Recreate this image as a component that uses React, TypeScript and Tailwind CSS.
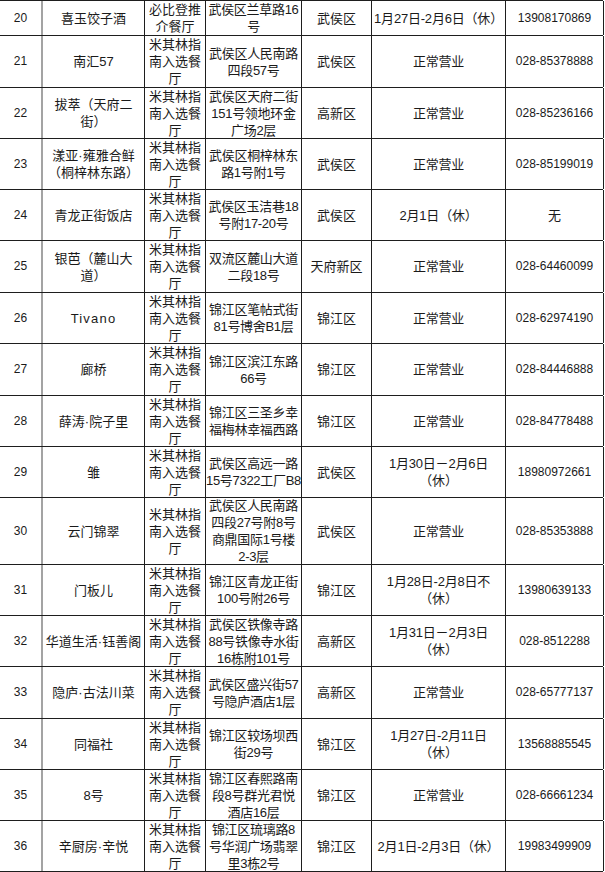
import React from "react";

type Row = {
  no: string;
  name: string[];
  kind: string[];
  addr: string[];
  area: string;
  hours: string[];
  phone: string;
};

const MICHELIN = ["米其林指", "南入选餐", "厅"];
const OPEN = ["正常营业"];

const rows: Row[] = [
  { no: "20", name: ["喜玉饺子酒"], kind: ["必比登推", "介餐厅"], addr: ["武侯区兰草路16", "号"], area: "武侯区", hours: ["1月27日-2月6日（休）"], phone: "13908170869" },
  { no: "21", name: ["南汇57"], kind: MICHELIN, addr: ["武侯区人民南路", "四段57号"], area: "武侯区", hours: OPEN, phone: "028-85378888" },
  { no: "22", name: ["拔萃（天府二", "街）"], kind: MICHELIN, addr: ["武侯区天府二街", "151号领地环金", "广场2层"], area: "高新区", hours: OPEN, phone: "028-85236166" },
  { no: "23", name: ["漾亚·雍雅合鲜", "（桐梓林东路）"], kind: MICHELIN, addr: ["武侯区桐梓林东", "路1号附1号"], area: "武侯区", hours: OPEN, phone: "028-85199019" },
  { no: "24", name: ["青龙正街饭店"], kind: MICHELIN, addr: ["武侯区玉洁巷18", "号附17-20号"], area: "武侯区", hours: ["2月1日（休）"], phone: "无" },
  { no: "25", name: ["银芭（麓山大", "道）"], kind: MICHELIN, addr: ["双流区麓山大道", "二段18号"], area: "天府新区", hours: OPEN, phone: "028-64460099" },
  { no: "26", name: ["Tivano"], kind: MICHELIN, addr: ["锦江区笔帖式街", "81号博舍B1层"], area: "锦江区", hours: OPEN, phone: "028-62974190" },
  { no: "27", name: ["廊桥"], kind: MICHELIN, addr: ["锦江区滨江东路", "66号"], area: "锦江区", hours: OPEN, phone: "028-84446888" },
  { no: "28", name: ["薛涛·院子里"], kind: MICHELIN, addr: ["锦江区三圣乡幸", "福梅林幸福西路"], area: "锦江区", hours: OPEN, phone: "028-84778488" },
  { no: "29", name: ["雏"], kind: MICHELIN, addr: ["武侯区高远一路", "15号7322工厂B8"], area: "武侯区", hours: ["1月30日－2月6日", "（休）"], phone: "18980972661" },
  { no: "30", name: ["云门锦翠"], kind: MICHELIN, addr: ["武侯区人民南路", "四段27号附8号", "商鼎国际1号楼", "2-3层"], area: "武侯区", hours: OPEN, phone: "028-85353888" },
  { no: "31", name: ["门板儿"], kind: MICHELIN, addr: ["锦江区青龙正街", "100号附26号"], area: "锦江区", hours: ["1月28日-2月8日不", "（休）"], phone: "13980639133" },
  { no: "32", name: ["华道生活·钰善阁"], kind: MICHELIN, addr: ["武侯区铁像寺路", "88号铁像寺水街", "16栋附101号"], area: "高新区", hours: ["1月31日－2月3日", "（休）"], phone: "028-8512288" },
  { no: "33", name: ["隐庐·古法川菜"], kind: MICHELIN, addr: ["武侯区盛兴街57", "号隐庐酒店1层"], area: "高新区", hours: OPEN, phone: "028-65777137" },
  { no: "34", name: ["同福社"], kind: MICHELIN, addr: ["锦江区较场坝西", "街29号"], area: "锦江区", hours: ["1月27日-2月11日", "（休）"], phone: "13568885545" },
  { no: "35", name: ["8号"], kind: MICHELIN, addr: ["锦江区春熙路南", "段8号群光君悦", "酒店16层"], area: "锦江区", hours: OPEN, phone: "028-66661234" },
  { no: "36", name: ["辛厨房·辛悦"], kind: MICHELIN, addr: ["锦江区琉璃路8", "号华润广场翡翠", "里3栋2号"], area: "锦江区", hours: ["2月1日-2月3日（休）"], phone: "19983499909" },
];

// row heights including the bottom rule, read off the screenshot
const heights = [
  "h-[35px]", "h-[52px]", "h-[51px]", "h-[51px]", "h-[51px]", "h-[52px]",
  "h-[51px]", "h-[52px]", "h-[51px]", "h-[51px]", "h-[67px]", "h-[51px]",
  "h-[51px]", "h-[52px]", "h-[51px]", "h-[51px]", "h-[51px]",
];

function Lines({ lines }: { lines: string[] }) {
  return (
    <span className="whitespace-nowrap">
      {lines.map((l, i) => (
        <React.Fragment key={i}>
          {i > 0 && <br />}
          {l}
        </React.Fragment>
      ))}
    </span>
  );
}

const cell = "flex items-center justify-center overflow-hidden text-center border-r border-[#1e1e1e]";
const digits = "text-[12px]";

export default function App() {
  return (
    <div className="w-[605px] h-[872px] overflow-hidden bg-white text-[#1a1a1a] text-[13px] leading-[17px] font-['Liberation_Sans','Noto_Sans_CJK_SC',sans-serif]">
      <div className="w-[603px] border-t border-[#1e1e1e]">
        {rows.map((r, i) => (
          <div
            key={r.no}
            className={`grid grid-cols-[43px_102px_61px_96px_70px_134px_98px] border-b border-[#1e1e1e] ${heights[i]}`}
          >
            <div className={`flex items-center justify-center overflow-hidden border-r-2 border-[#a3a3a3] ${digits}`}>
              {r.no}
            </div>
            <div className={`${cell} ${r.name[0] === "Tivano" ? "tracking-[1.2px]" : ""}`}>
              <Lines lines={r.name} />
            </div>
            <div className={cell}>
              <Lines lines={r.kind} />
            </div>
            <div className={`${cell} tracking-[-0.3px]`}>
              <Lines lines={r.addr} />
            </div>
            <div className={cell}>{r.area}</div>
            <div className={`${cell} tracking-[-0.2px]`}>
              <Lines lines={r.hours} />
            </div>
            <div className={`${cell} ${r.phone === "无" ? "" : digits}`}>{r.phone}</div>
          </div>
        ))}
      </div>
    </div>
  );
}
